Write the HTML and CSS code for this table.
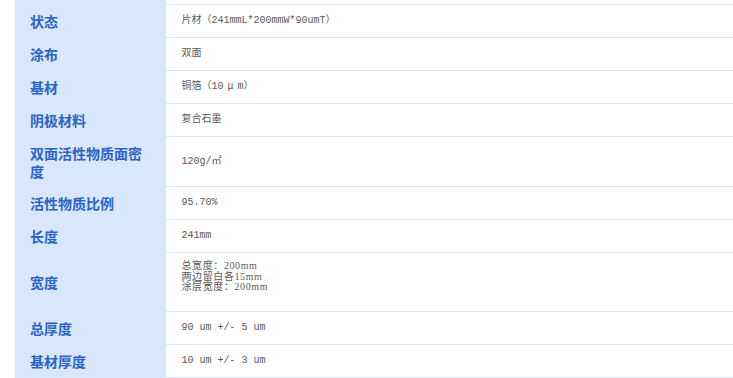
FILE: index.html
```html
<!DOCTYPE html>
<html lang="zh">
<head>
<meta charset="utf-8">
<link rel="stylesheet" href="styles.css">
</head>
<body>
<div class="wrap">
<table class="spec">
<colgroup><col class="c-label"><col class="c-value"></colgroup>
<tbody>
<tr class="spacer"><th></th><td></td></tr>
<tr class="first"><th>状态</th><td>片材（241mmL*200mmW*90umT）</td></tr>
<tr><th>涂布</th><td>双面</td></tr>
<tr><th>基材</th><td>铜箔（10<span class="mu">μ</span>m）</td></tr>
<tr><th>阴极材料</th><td>复合石墨</td></tr>
<tr><th>双面活性物质面密度</th><td>120g/㎡</td></tr>
<tr><th>活性物质比例</th><td>95.70%</td></tr>
<tr><th>长度</th><td>241mm</td></tr>
<tr><th>宽度</th><td class="multi">总宽度：200mm<br>两边留白各15mm<br>涂层宽度：200mm<br>&nbsp;</td></tr>
<tr><th>总厚度</th><td>90 um +/- 5 um</td></tr>
<tr><th>基材厚度</th><td>10 um +/- 3 um</td></tr>
</tbody>
</table>
</div>
</body>
</html>
```
FILE: styles.css
```css
html, body {
  margin: 0;
  padding: 0;
  background: #fff;
}
.wrap {
  padding-left: 15px;
}
.spec {
  border-collapse: collapse;
  width: 718px;
  table-layout: fixed;
}
.c-label {
  width: 151px;
}
.spec th {
  background: #d9e7fd;
  color: #2b63c8;
  font-family: "Noto Sans CJK SC", sans-serif;
  font-weight: bold;
  font-size: 14px;
  line-height: 18px;
  text-align: left;
  padding: 7px 15px 7px 15px;
  border-right: 1px dotted #ffffff;
  vertical-align: middle;
}
.spec td {
  font-family: "Liberation Mono", "Noto Sans CJK SC", monospace;
  font-size: 10px;
  line-height: 18px;
  color: #5a5a5a;
  padding: 7px 15px;
  border-bottom: 1px solid #dce6f6;
  vertical-align: middle;
}
.spec td .mu {
  margin: 0 4px;
}
.spec tr.first td {
  border-top: 1px solid #dce6f6;
}
.spec tr.spacer th,
.spec tr.spacer td {
  height: 4px;
  padding: 0;
  border-bottom: none;
  line-height: 0;
}
.spec td.multi {
  font-family: "Liberation Serif", "Noto Sans CJK SC", serif;
  font-size: 10px;
  letter-spacing: 0.6px;
  line-height: 10.5px;
  padding: 8px 15px;
}
```
